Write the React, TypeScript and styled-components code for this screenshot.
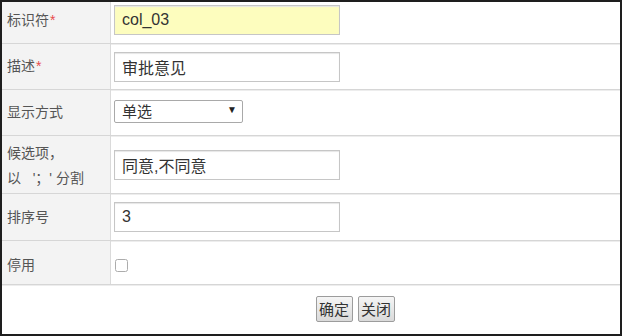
import styled, { createGlobalStyle } from 'styled-components'

const GlobalStyle = createGlobalStyle`
  html, body {
    margin: 0;
    padding: 0;
    background: #fff;
  }
  body {
    font-family: "Liberation Sans", "Noto Sans CJK SC", sans-serif;
  }
`

const Frame = styled.div`
  width: 622px;
  height: 336px;
  box-sizing: border-box;
  border: 2px solid #1e1e1e;
  display: flex;
  flex-direction: column;
  background: #fff;
`

const Row = styled.div<{ $h: number }>`
  display: grid;
  grid-template-columns: 109px 1fr;
  height: ${p => p.$h}px;
  box-sizing: border-box;
  border-bottom: 1px solid #d6d6d6;
  box-shadow: 0 1px 0 #ededed;
`

const Label = styled.div<{ $pt?: number; $pb?: number }>`
  background: #f3f3f3;
  border-right: 1px solid #dadada;
  display: flex;
  align-items: center;
  padding: ${p => p.$pt ?? 0}px 0 ${p => p.$pb ?? 0}px 5px;
  font-size: 14px;
  line-height: 25px;
  color: #555;
`

const Required = styled.span`
  color: #e84c4c;
  margin-left: 1px;
`

const Cell = styled.div<{ $pt?: number; $pb?: number }>`
  display: flex;
  align-items: center;
  padding: ${p => p.$pt ?? 0}px 0 ${p => p.$pb ?? 0}px 3px;
`

const TextInput = styled.input<{ $warn?: boolean }>`
  width: 226px;
  height: 30px;
  box-sizing: border-box;
  margin: 0;
  border: 1px solid #c6c6c6;
  box-shadow: inset 0 1px 1px #e6e6e6;
  background: ${p => (p.$warn ? '#fdfdbe' : '#fff')};
  padding: 0 7px;
  font-family: "Liberation Sans", "Noto Sans CJK SC", sans-serif;
  font-size: 16px;
  color: #333;
  outline: none;
`

const SelectWrap = styled.div`
  position: relative;
  width: 129px;
  height: 23px;

  &::after {
    content: '▼';
    position: absolute;
    right: 6px;
    top: 4px;
    font-size: 10px;
    color: #222;
    pointer-events: none;
  }
`

const Select = styled.select`
  appearance: none;
  width: 100%;
  height: 100%;
  box-sizing: border-box;
  margin: 0;
  border: 1px solid #a9a9a9;
  border-radius: 2px;
  background: #fff;
  padding: 0 7px;
  font-family: "Liberation Sans", "Noto Sans CJK SC", sans-serif;
  font-size: 15px;
  color: #333;
  outline: none;
`

const Check = styled.input`
  width: 13px;
  height: 13px;
  margin: 0 0 0 1px;
  accent-color: #888;
  opacity: 0.6;
`

const Footer = styled.div`
  flex: 1;
  display: flex;
  align-items: center;
  justify-content: center;
  gap: 5px;
  padding: 0 0 2px 88px;
`

const Button = styled.button`
  height: 26px;
  width: 37px;
  padding: 0;
  margin: 0;
  border: 1px solid #9c9c9c;
  border-radius: 2px;
  background: linear-gradient(#f5f5f5, #dadada);
  font-family: "Liberation Sans", "Noto Sans CJK SC", sans-serif;
  font-size: 15px;
  color: #333;
`

export default function App() {
  return (
    <>
      <GlobalStyle />
      <Frame>
        <Row $h={42}>
          <Label $pb={5}>
            标识符<Required>*</Required>
          </Label>
          <Cell $pb={5}>
            <TextInput $warn defaultValue="col_03" />
          </Cell>
        </Row>
        <Row $h={46}>
          <Label>
            描述<Required>*</Required>
          </Label>
          <Cell>
            <TextInput defaultValue="审批意见" />
          </Cell>
        </Row>
        <Row $h={46}>
          <Label>显示方式</Label>
          <Cell $pb={3}>
            <SelectWrap>
              <Select defaultValue="single">
                <option value="single">单选</option>
                <option value="multi">多选</option>
              </Select>
            </SelectWrap>
          </Cell>
        </Row>
        <Row $h={58}>
          <Label $pt={3}>
            候选项，
            <br />
            {'以\u00a0\u00a0 \'；\' 分割'}
          </Label>
          <Cell>
            <TextInput defaultValue="同意,不同意" />
          </Cell>
        </Row>
        <Row $h={47}>
          <Label>排序号</Label>
          <Cell>
            <TextInput defaultValue="3" />
          </Cell>
        </Row>
        <Row $h={44}>
          <Label $pt={5}>停用</Label>
          <Cell $pt={6}>
            <Check type="checkbox" />
          </Cell>
        </Row>
        <Footer>
          <Button>确定</Button>
          <Button>关闭</Button>
        </Footer>
      </Frame>
    </>
  )
}
